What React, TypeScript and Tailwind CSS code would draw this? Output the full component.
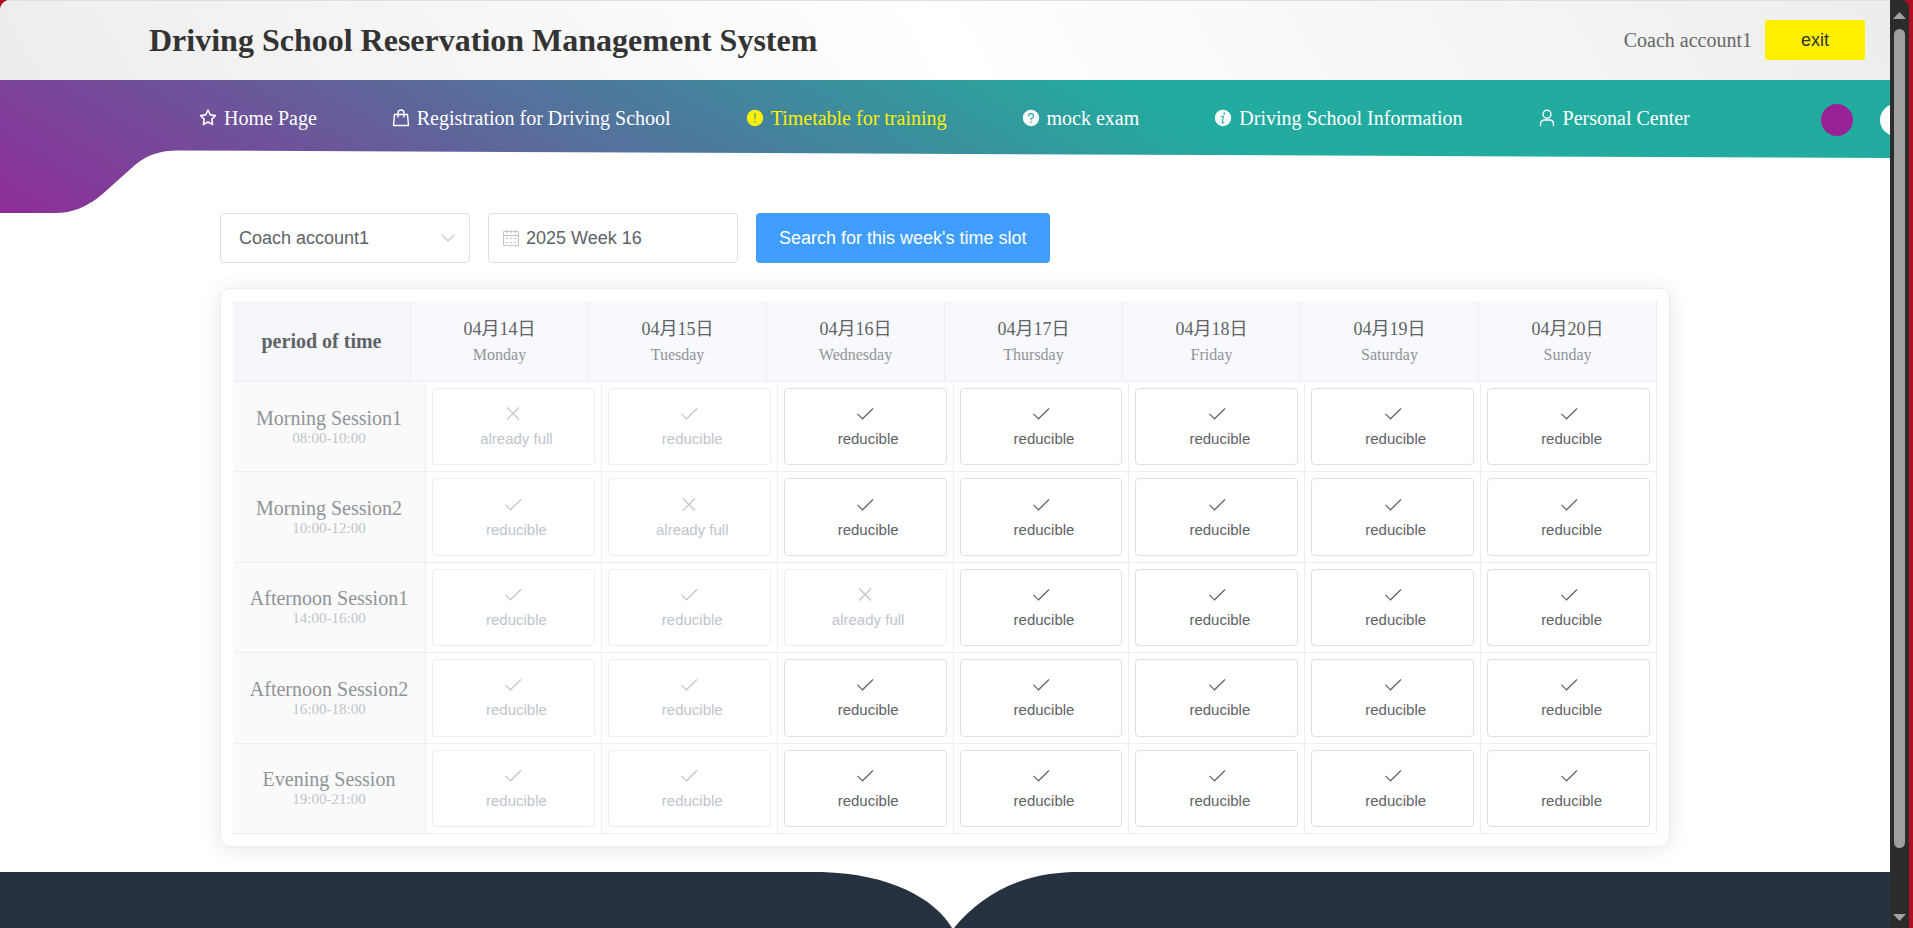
import { useState } from "react";
import type { ReactNode } from "react";

type IconProps = { className?: string };

function Star({ className }: IconProps) {
  return (
    <svg className={className} viewBox="0 0 1024 1024" fill="none" stroke="currentColor" strokeWidth="80" strokeLinejoin="round" aria-hidden="true">
      <path d="M512 110 634 352 896 390 704 576 750 844 512 718 274 844 320 576 128 390 390 352Z" />
    </svg>
  );
}

function Bag({ className }: IconProps) {
  return (
    <svg className={className} viewBox="0 0 20 20" fill="none" stroke="currentColor" strokeWidth="1.4" strokeLinejoin="round" aria-hidden="true">
      <path d="M3.5 6.5h13l1 11h-15z" />
      <path d="M7 9V5a3 3 0 0 1 6 0v4" strokeLinecap="round" />
    </svg>
  );
}

function Warning({ className }: IconProps) {
  return (
    <svg className={className} viewBox="0 0 20 20" aria-hidden="true">
      <circle cx="10" cy="10" r="8.2" fill="currentColor" />
      <path d="M9.3 5.200h1.400l-.3 6.400h-.8z" fill="#38939f" />
      <circle cx="10" cy="13.9" r=".8" fill="#38939f" />
    </svg>
  );
}

function Question({ className }: IconProps) {
  return (
    <svg className={className} viewBox="0 0 20 20" aria-hidden="true">
      <circle cx="10" cy="10" r="8.2" fill="currentColor" />
      <path d="M7.500 8.100A2.500 2.500 0 1 1 10 10.600v1.200" fill="none" stroke="#25a69f" strokeWidth="1.1" strokeLinecap="round" />
      <circle cx="10" cy="14.1" r=".8" fill="#25a69f" />
    </svg>
  );
}

function Info({ className }: IconProps) {
  return (
    <svg className={className} viewBox="0 0 20 20" aria-hidden="true">
      <circle cx="10" cy="10" r="8.2" fill="currentColor" />
      <circle cx="11.3" cy="5.400" r="1" fill="#22ac9f" />
      <path d="M8.200 8.700c1-.6 1.900-.9 2.200-.6.4.4-1.200 5.200-1.300 6.400 0 .9.800.6 1.800-.3" fill="none" stroke="#22ac9f" strokeWidth="1.100" strokeLinecap="round" />
    </svg>
  );
}

function User({ className }: IconProps) {
  return (
    <svg className={className} viewBox="0 0 20 20" fill="none" stroke="currentColor" strokeWidth="1.400" strokeLinecap="round" aria-hidden="true">
      <circle cx="10" cy="6.300" r="4" />
      <path d="M3.500 17.500v-1.300c0-2.800 1.900-4.200 4.200-4.200h4.600c2.300 0 4.200 1.400 4.200 4.200v1.300" />
    </svg>
  );
}

function Check() {
  return (
    <svg className="h-5 w-5" viewBox="0 0 20 20" fill="none" stroke="currentColor" strokeWidth="1.2" aria-hidden="true">
      <path d="m2.500 9.800 5 5L18 4.500" />
    </svg>
  );
}

function Cross() {
  return (
    <svg className="h-5 w-5" viewBox="0 0 20 20" fill="none" stroke="currentColor" strokeWidth="1.200" aria-hidden="true">
      <path d="m4 3.500 12 12M16 3.500l-12 12" />
    </svg>
  );
}

function Calendar({ className }: IconProps) {
  return (
    <svg className={className} viewBox="0 0 18 18" fill="none" stroke="currentColor" strokeWidth="1" aria-hidden="true">
      <path d="M1.500 2.500h15v14h-15zM1.500 6.500h15M4.500 1v3M13.500 1v3M9 1v3" />
      <path d="M4 9.500h10M4 13.500h10" strokeDasharray="2 2" />
    </svg>
  );
}

const navItems: { label: string; icon: (p: IconProps) => ReactNode; active?: boolean }[] = [
  { label: "Home Page", icon: Star },
  { label: "Registration for Driving School", icon: Bag },
  { label: "Timetable for training", icon: Warning, active: true },
  { label: "mock exam", icon: Question },
  { label: "Driving School Information", icon: Info },
  { label: "Personal Center", icon: User },
];

const days = [
  ["04月14日", "Monday"],
  ["04月15日", "Tuesday"],
  ["04月16日", "Wednesday"],
  ["04月17日", "Thursday"],
  ["04月18日", "Friday"],
  ["04月19日", "Saturday"],
  ["04月20日", "Sunday"],
];

const sessions = [
  { name: "Morning Session1", time: "08:00-10:00", full: 0, past: 2 },
  { name: "Morning Session2", time: "10:00-12:00", full: 1, past: 2 },
  { name: "Afternoon Session1", time: "14:00-16:00", full: 2, past: 2 },
  { name: "Afternoon Session2", time: "16:00-18:00", full: -1, past: 2 },
  { name: "Evening Session", time: "19:00-21:00", full: -1, past: 2 },
];

function Header() {
  return (
    <header className="flex h-20 items-center justify-between bg-[linear-gradient(60deg,#ededed_0%,#ffffff_50%,#ededed_100%)] pr-[25px] pl-[149px] shadow-[inset_0_1px_0_#ead9dd]">
      <h1 className="text-[32px] font-bold text-[#333]">Driving School Reservation Management System</h1>
      <div className="flex items-center gap-[13px]">
        <span className="text-xl text-[#666]">Coach account1</span>
        <button className="h-10 w-[100px] rounded-[2px] bg-[#fff000] font-[Liberation_Sans,sans-serif] text-lg text-[#333]">exit</button>
      </div>
    </header>
  );
}

function Nav() {
  return (
    <div className="relative h-[133px] overflow-hidden bg-[linear-gradient(30deg,#8e2d98_0%,#22ac9f_64%)]">
      <svg className="absolute inset-0 h-full w-full" viewBox="0 0 1890 133" preserveAspectRatio="none" aria-hidden="true">
        <path d="M0 133H56C78 133 94 122 107 110L135 85C147 75 160 70.500 178 70.500L1890 78V133Z" fill="#fff" />
      </svg>
      <nav className="relative flex h-[75px] items-center gap-[74px] pl-[198px] whitespace-nowrap">
        {navItems.map(({ label, icon: Icon, active }) => (
          <a key={label} href="#" className={active ? "flex items-center gap-[6px] text-xl text-[#fff000]" : "flex items-center gap-[6px] text-xl text-white"}>
            <Icon className="h-5 w-5" />
            {label}
          </a>
        ))}
      </nav>
      <div className="absolute top-6 -right-[22px] flex gap-[27px]">
        <button aria-label="Purple theme" className="h-8 w-8 rounded-full bg-[#992298]" />
        <button aria-label="White theme" className="h-8 w-8 rounded-full bg-white" />
      </div>
    </div>
  );
}

function Filters() {
  return (
    <div className="flex gap-[18px] font-[Liberation_Sans,sans-serif] text-lg text-[#606266]">
      <div className="relative w-[250px]">
        <select aria-label="Coach" className="h-[50px] w-full appearance-none rounded border border-[#dcdfe6] bg-white pr-10 pl-[18px]">
          <option>Coach account1</option>
        </select>
        <svg className="pointer-events-none absolute top-[18px] right-[15px] h-[14px] w-[14px] text-[#c0c4cc]" viewBox="0 0 14 14" fill="none" stroke="currentColor" strokeWidth="1.200" aria-hidden="true">
          <path d="m1 4 6 6 6-6" />
        </svg>
      </div>
      <div className="relative w-[250px]">
        <Calendar className="pointer-events-none absolute top-4 left-[14px] h-[18px] w-[18px] text-[#c0c4cc]" />
        <input aria-label="Week" defaultValue="2025 Week 16" className="h-[50px] w-full rounded border border-[#dcdfe6] bg-white pr-4 pl-[37px]" />
      </div>
      <button className="h-[50px] rounded bg-[#409eff] px-[23px] text-white">Search for this week's time slot</button>
    </div>
  );
}

function Slot({ full, disabled, label, selected, onSelect }: { full: boolean; disabled: boolean; label: string; selected: boolean; onSelect: () => void }) {
  return (
    <button
      aria-label={label}
      aria-pressed={selected}
      disabled={disabled}
      onClick={onSelect}
      className={
        disabled
          ? "flex h-full w-full flex-col items-center justify-center gap-[5px] rounded border border-[#ebeef5] bg-white text-[#c0c4cc]"
          : "flex h-full w-full flex-col items-center justify-center gap-[5px] rounded border border-[#dcdfe6] bg-white text-[#606266]"
      }
    >
      {full ? <Cross /> : <Check />}
      <span className="pl-[6px] text-[15px] leading-5">{full ? "already full" : "reducible"}</span>
    </button>
  );
}

function Timetable() {
  const [selected, setSelected] = useState("");
  return (
    <div className="rounded-[10px] border border-[#ebeef5] bg-white p-3 shadow-[0_2px_20px_rgba(0,0,0,0.1)]">
      <table className="block text-center">
        <thead className="block">
          <tr className="grid h-[81px] grid-cols-8 border-b border-[#ebeef5] bg-[#f8f9fc]">
            <th scope="col" className="flex items-center justify-center border-r border-[#ebeef5] bg-[#f5f7fa] text-xl font-bold text-[#606266]">
              period of time
            </th>
            {days.map(([date, day]) => (
              <th key={day} scope="col" className="flex flex-col items-center justify-center border-r border-[#ebeef5] font-normal">
                <span className="text-lg leading-7 text-[#606266]">{date}</span>
                <span className="text-base leading-6 text-[#909399]">{day}</span>
              </th>
            ))}
          </tr>
        </thead>
        <tbody className="grid h-[452px] grid-rows-5">
          {sessions.map((session) => (
            <tr key={session.name} className="grid grid-cols-[193px_repeat(7,minmax(0,1fr))] border-b border-[#ebeef5]">
              <th scope="row" className="flex flex-col items-center justify-center border-r border-[#ebeef5] bg-[#fafafa] pt-[2px] font-normal">
                <span className="text-xl leading-5 text-[#909399]">{session.name}</span>
                <span className="text-[15px] leading-5 text-[#c0c4cc]">{session.time}</span>
              </th>
              {days.map(([, day], i) => (
                <td key={day} className="border-r border-[#ebeef5] p-[6px] font-[Liberation_Sans,sans-serif]">
                  <Slot
                    full={i === session.full}
                    disabled={i < session.past || i === session.full}
                    label={`${session.name} ${day}`}
                    selected={selected === session.name + day}
                    onSelect={() => setSelected(session.name + day)}
                  />
                </td>
              ))}
            </tr>
          ))}
        </tbody>
      </table>
    </div>
  );
}

function Footer() {
  return (
    <footer className="h-14 shrink-0 bg-white">
      <svg className="block h-full w-full" viewBox="0 0 1890 56" preserveAspectRatio="none" aria-hidden="true">
        <path d="M0 0H822C890 2 934 26 952 56H0Z" fill="#273240" />
        <path d="M1890 0H1072C1020 2 982 22 954 56H1890Z" fill="#273240" />
      </svg>
    </footer>
  );
}

function ScrollBar() {
  return (
    <div className="flex w-[19px] shrink-0 flex-col rounded-tr-[8px] bg-[#2c2c2c] pt-3 pb-[7px]" aria-hidden="true">
      <svg className="mx-auto h-[7px] w-[13px] fill-[#a0a0a0]" viewBox="0 0 13 7"><path d="M0 7 6.500 0 13 7Z" /></svg>
      <div className="mx-auto mt-[10px] w-[11px] grow-[819] rounded-full bg-[#9f9f9f]" />
      <div className="grow-[66]" />
      <svg className="mx-auto h-[7px] w-[13px] fill-[#a0a0a0]" viewBox="0 0 13 7"><path d="M0 0 6.500 7 13 0Z" /></svg>
    </div>
  );
}

export default function App() {
  return (
    <div className="flex h-screen overflow-hidden bg-[#b01020] pr-1 font-[Liberation_Serif,Noto_Sans_CJK_SC,serif]">
      <div className="flex min-w-0 grow flex-col overflow-hidden rounded-tl-[10px] bg-white">
        <Header />
        <Nav />
        <main className="grow pr-[220px] pl-[220px]">
          <Filters />
          <div className="mt-[25px]">
            <Timetable />
          </div>
        </main>
        <Footer />
      </div>
      <ScrollBar />
    </div>
  );
}
